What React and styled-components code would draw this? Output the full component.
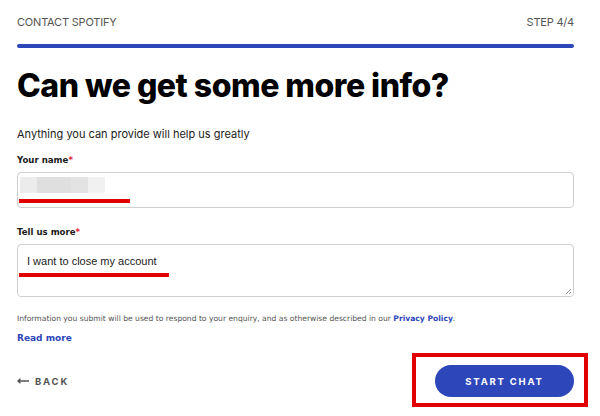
import React from "react";
import styled, { createGlobalStyle } from "styled-components";

const GlobalStyle = createGlobalStyle`
  body {
    margin: 0;
    background: #ffffff;
    font-family: "Liberation Sans", Arial, sans-serif;
  }
`;

const Page = styled.div`
  width: 557px;
  min-height: 416px;
  box-sizing: content-box;
  padding: 0 26px 0 17px;
  position: relative;
`;

const Header = styled.div`
  display: flex;
  justify-content: space-between;
  align-items: center;
  height: 22px;
  padding-top: 11px;
  font-family: "Inter", sans-serif;
  font-size: 11px;
  color: #555;
  letter-spacing: -0.2px;
`;

const Progress = styled.div`
  height: 4px;
  margin-top: 11px;
  border-radius: 2px;
  background: #2d46b9;
`;

const Title = styled.h1`
  margin: 18px 0 0;
  font-family: "Inter", sans-serif;
  font-weight: 800;
  font-size: 32px;
  line-height: 40px;
  letter-spacing: -0.5px;
  color: #000;
`;

const Lead = styled.p`
  margin: 21px 0 0;
  font-family: "Inter", sans-serif;
  font-size: 11px;
  color: #222;
`;

const Label = styled.div`
  margin-top: ${(p) => p.$top}px;
  font-family: "DejaVu Sans", Verdana, sans-serif;
  font-weight: bold;
  font-size: 8.6px;
  color: #1a1a1a;

  span {
    color: #e22134;
  }
`;

const Field = styled.div`
  position: relative;
  margin-top: 7px;
  height: ${(p) => p.$height}px;
  box-sizing: border-box;
  border: 1px solid #cfcfcf;
  border-radius: 4px;
  background: #fff;
`;

const Blurred = styled.div`
  display: flex;
  margin: 4px 0 0 2px;
  height: 16px;
  width: 85px;
`;

const Pixel = styled.div`
  width: ${(p) => p.$w}px;
  background: ${(p) => p.$c};
`;

const FieldText = styled.div`
  padding: 10px 0 0 9px;
  font-family: "Liberation Sans", Arial, sans-serif;
  font-size: 11px;
  color: #222;
`;

const Underline = styled.div`
  position: absolute;
  left: 1px;
  top: ${(p) => p.$top}px;
  width: ${(p) => p.$w}px;
  height: 4px;
  background: #e00000;
`;

const Grip = styled.svg`
  position: absolute;
  right: 1px;
  bottom: 1px;
`;

const Notice = styled.p`
  margin: 17px 0 0;
  font-family: "DejaVu Sans", Verdana, sans-serif;
  font-size: 7.6px;
  color: #555;

  a {
    color: #2d46b9;
    font-weight: bold;
    text-decoration: none;
  }
`;

const ReadMore = styled.a`
  display: block;
  margin-top: 10px;
  font-family: "DejaVu Sans", Verdana, sans-serif;
  font-weight: bold;
  font-size: 9px;
  color: #2d46b9;
  text-decoration: none;
`;

const Footer = styled.div`
  display: flex;
  justify-content: space-between;
  align-items: center;
  margin-top: 22px;
`;

const Back = styled.div`
  display: flex;
  align-items: center;
  gap: 6px;
  font-family: "Inter", sans-serif;
  font-weight: 700;
  font-size: 9.5px;
  letter-spacing: 1.8px;
  color: #555;
`;

const ChatWrap = styled.div`
  position: relative;
  display: flex;
`;

const ChatButton = styled.button`
  width: 139px;
  height: 32px;
  border: none;
  border-radius: 16px;
  background: #2d46b9;
  color: #fff;
  font-family: "Inter", sans-serif;
  font-weight: 700;
  font-size: 9.5px;
  letter-spacing: 1.8px;
`;

const Highlight = styled.div`
  position: absolute;
  left: -23px;
  top: -12px;
  width: 176px;
  height: 54px;
  box-sizing: border-box;
  border: 4px solid #e00000;
  pointer-events: none;
`;

export default function App() {
  return (
    <Page>
      <GlobalStyle />
      <Header>
        <span>CONTACT SPOTIFY</span>
        <span>STEP 4/4</span>
      </Header>
      <Progress />
      <Title>Can we get some more info?</Title>
      <Lead>Anything you can provide will help us greatly</Lead>

      <Label $top={14}>
        Your name<span>*</span>
      </Label>
      <Field $height={36}>
        <Blurred>
          <Pixel $w={17} $c="#ececec" />
          <Pixel $w={34} $c="#dfdfdf" />
          <Pixel $w={17} $c="#e3e3e3" />
          <Pixel $w={17} $c="#f1f1f1" />
        </Blurred>
        <Underline $top={26} $w={111} />
      </Field>

      <Label $top={19}>
        Tell us more<span>*</span>
      </Label>
      <Field $height={53}>
        <FieldText>I want to close my account</FieldText>
        <Underline $top={28} $w={150} />
        <Grip width="8" height="8" viewBox="0 0 8 8">
          <path d="M7 2 L2 7 M7 5 L5 7" stroke="#999" strokeWidth="1" />
        </Grip>
      </Field>

      <Notice>
        Information you submit will be used to respond to your enquiry, and as
        otherwise described in our <a href="#">Privacy Policy</a>.
      </Notice>
      <ReadMore href="#">Read more</ReadMore>

      <Footer>
        <Back>
          <svg width="12" height="6" viewBox="0 0 12 6">
            <path d="M12 3 H1.5 M3.5 0.8 L1 3 L3.5 5.2" stroke="#555" strokeWidth="1.4" fill="none" />
          </svg>
          BACK
        </Back>
        <ChatWrap>
          <ChatButton>START CHAT</ChatButton>
          <Highlight />
        </ChatWrap>
      </Footer>
    </Page>
  );
}
